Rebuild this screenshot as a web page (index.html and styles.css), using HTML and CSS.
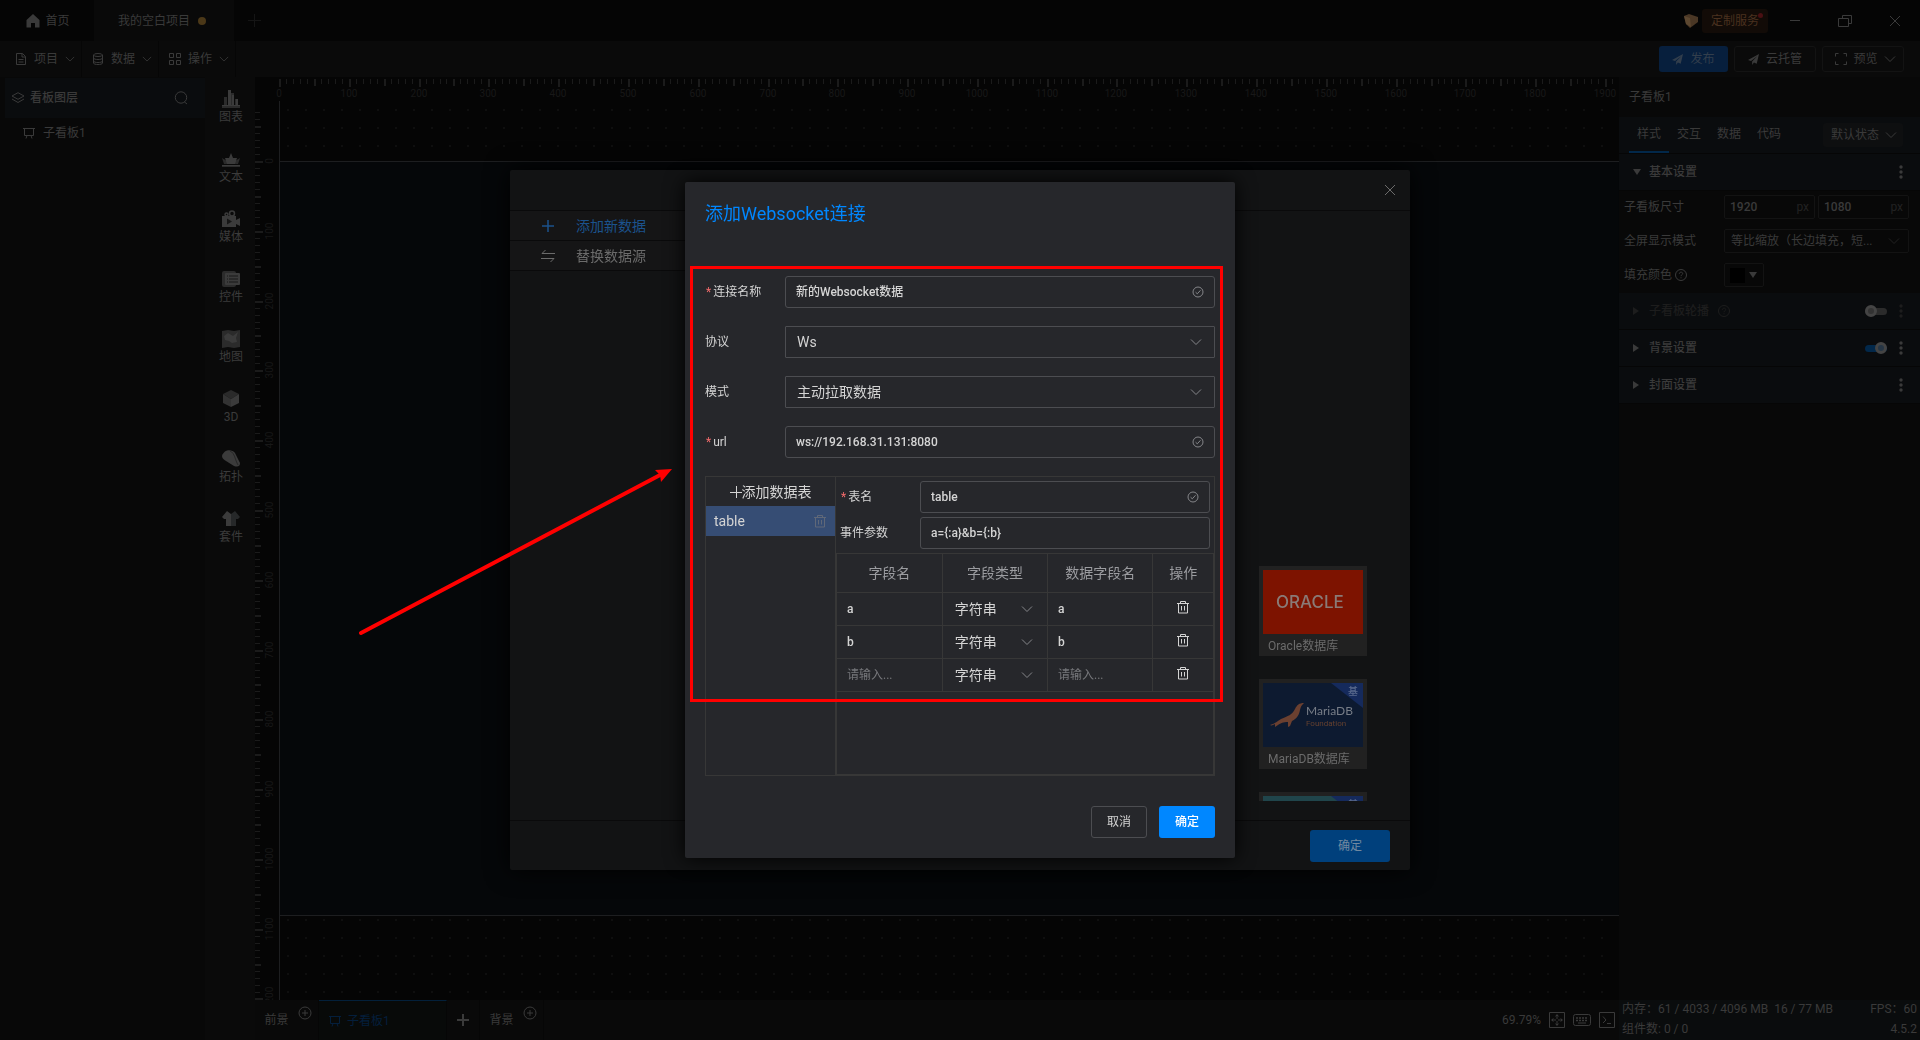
FILE: index.html
```html
<!DOCTYPE html>
<html lang="zh-CN">
<head>
<meta charset="UTF-8" />
<meta name="viewport" content="width=device-width, initial-scale=1" />
<title>我的空白项目</title>
<link rel="stylesheet" href="styles.css">
</head>
<body>

<svg class="sprite" aria-hidden="true">
  <symbol id="i-down" viewBox="0 0 12 12"><path d="M1 3.500 6 8.500l5-5" fill="none" stroke="currentColor"/></symbol>
  <symbol id="i-check" viewBox="0 0 12 12"><g fill="none" stroke="currentColor"><circle cx="6" cy="6" r="5"/><path d="M3.600 6.200 5.300 7.800 8.500 4.300"/></g></symbol>
  <symbol id="i-trash" viewBox="0 0 14 14"><path d="M1 3.500h12M4.500 3.500V1.500h5v2M2.500 3.500v9.500h9V3.500M5.500 6v4.500M8.500 6v4.500" fill="none" stroke="currentColor"/></symbol>
  <symbol id="i-board" viewBox="0 0 12 12"><path d="M0 1.500h12M1.500 1.500v7h9v-7M4 8.500 3 11.500M8 8.500l1 3" fill="none" stroke="currentColor"/></symbol>
  <symbol id="i-add" viewBox="0 0 14 14"><g fill="none" stroke="currentColor"><circle cx="7" cy="7" r="6"/><path d="M4 7h6M7 4v6"/></g></symbol>
  <symbol id="i-help" viewBox="0 0 14 14"><g fill="none" stroke="currentColor"><circle cx="7" cy="7" r="5.500"/><path d="M5.300 5.800C5.300 3.600 8.700 3.600 8.700 5.600 8.700 6.700 7 6.800 7 8.200M7 9.300v1"/></g></symbol>
  <symbol id="i-more" viewBox="0 0 4 14"><g fill="currentColor"><circle cx="2" cy="2" r="1.700"/><circle cx="2" cy="7" r="1.700"/><circle cx="2" cy="12" r="1.700"/></g></symbol>
  <symbol id="i-plane" viewBox="0 0 12 12"><path d="M12 0 0 6.500l3.300 1.200L10 2.500 4.500 8.300V12l2-2.600 3 1.200z" fill="currentColor"/></symbol>
  <symbol id="i-close" viewBox="0 0 12 12"><path d="M1 1l10 10M11 1 1 11" fill="none" stroke="currentColor"/></symbol>
</svg>

<div class="app">
  <header class="titlebar">
    <button class="tab home">
      <svg width="14" height="14" viewBox="0 0 14 14"><path d="M7 0 .500 6v7.500h4.500V9h4v4.500h4.500V6z" fill="currentColor"/></svg>首页
    </button>
    <button class="tab active">我的空白项目<i class="dot"></i></button>
    <button class="tab-add" aria-label="新建"><svg width="13" height="13" viewBox="0 0 13 13"><path d="M0 6.500h13M6.500 0v13" stroke="currentColor"/></svg></button>
    <div class="window-tools">
      <svg width="14" height="14" viewBox="0 0 14 14"><path d="M0 2 5 0l9 3v5l-8 6-4-4z" fill="#4a3725"/><path d="M0 2l6 2 1 9-5-3z" fill="#5c4730"/></svg>
      <button class="service">定制服务<i></i></button>
      <button class="win" aria-label="最小化"><svg width="14" height="14" viewBox="0 0 14 14"><path d="M2 6.500h10" stroke="currentColor"/></svg></button>
      <button class="win" aria-label="还原"><svg width="14" height="14" viewBox="0 0 14 14"><path d="M.500 4.500h10v8h-10zM4.500 4.500v-3h9v8h-3" fill="none" stroke="currentColor"/></svg></button>
      <button class="win" aria-label="关闭"><svg width="12" height="12"><use href="#i-close"/></svg></button>
    </div>
  </header>

  <nav class="menubar">
    <button class="menu"><svg width="12" height="12" viewBox="0 0 12 12"><path d="M1.500.500h6l3 3v8h-9zM7 .500V4h3.500M3.500 6.500h5M3.500 9h5" fill="none" stroke="currentColor"/></svg>项目<svg class="arrow" width="10" height="10"><use href="#i-down"/></svg></button>
    <button class="menu"><svg width="12" height="12" viewBox="0 0 12 12"><g fill="none" stroke="currentColor"><ellipse cx="6" cy="2" rx="4.500" ry="1.500"/><path d="M1.500 2v8c0 2 9 2 9 0V2M1.500 5c0 2 9 2 9 0M1.500 8c0 2 9 2 9 0"/></g></svg>数据<svg class="arrow" width="10" height="10"><use href="#i-down"/></svg></button>
    <button class="menu"><svg width="12" height="12" viewBox="0 0 12 12"><path d="M.500.500h4v4h-4zM7.500.500h4v4h-4zM.500 7.500h4v4h-4zM7.500 7.500h4v4h-4z" fill="none" stroke="currentColor"/></svg>操作<svg class="arrow" width="10" height="10"><use href="#i-down"/></svg></button>
    <div class="actions">
      <button class="act publish"><svg width="11" height="11"><use href="#i-plane"/></svg>发布</button>
      <button class="act cloud"><svg width="11" height="11"><use href="#i-plane"/></svg>云托管</button>
      <button class="act preview"><svg width="12" height="12" viewBox="0 0 12 12"><path d="M.500 3.500v-3h3M8.500.500h3v3M11.500 8.500v3h-3M3.500 11.500h-3v-3" fill="none" stroke="currentColor"/></svg>预览<svg width="12" height="12"><use href="#i-down"/></svg></button>
    </div>
  </nav>

  <main class="workspace">
    <aside class="layers">
      <div class="layers-head">
        <svg width="14" height="12" viewBox="0 0 14 12"><path d="M7 .700 13 4 7 7.300 1 4zM1 7l6 3.500L13 7" fill="none" stroke="currentColor"/></svg>
        <b>看板图层</b>
        <svg width="14" height="14" viewBox="0 0 14 14"><g fill="none" stroke="currentColor"><circle cx="7" cy="6.500" r="5.700"/><path d="M10.500 11l2.500 2"/></g></svg>
      </div>
      <div class="layer"><svg width="12" height="12"><use href="#i-board"/></svg>子看板1</div>
    </aside>

    <nav class="tools">
      <button><svg width="18" height="18" viewBox="0 0 18 18"><path d="M0 16h18v2H0zM9 3h3v12H9zM2 7h3v8H2zM13 9h3v6h-3z" fill="#2b2b2b"/><path d="M0 15h18v1H0zM6 0h3v15H6zM10 5h2v10h-2zM14 9h2v6h-2z" fill="currentColor"/></svg>图表</button>
      <button><svg width="18" height="18" viewBox="0 0 18 18"><path d="M0 15h18v2H0zM0 8l5 3 1 3H2zM18 8l-5 3-1 3h4z" fill="#2b2b2b"/><path d="M9 3l2 5 4 0-2 6H5L3 8h4zM0 15h18v1H0z" fill="currentColor"/></svg>文本</button>
      <button><svg width="18" height="18" viewBox="0 0 18 18"><g fill="none" stroke="currentColor" stroke-width="1.500"><circle cx="10" cy="3.500" r="2.500"/><circle cx="4.500" cy="4.500" r="1.500"/></g><path d="M0 6h14v11H0zM14 10l4-2v8l-4-2z" fill="currentColor"/><path d="M5 8.500v6l5-3z" fill="#161616"/></svg>媒体</button>
      <button><svg width="18" height="18" viewBox="0 0 18 18"><rect y="1" width="14" height="16" rx="2" fill="#2b2b2b"/><rect x="3" y="3" width="15" height="12" rx="1" fill="currentColor"/><path d="M5 6h1M7 6h9M5 9h1M7 9h9M5 12h1M7 12h9" stroke="#191919"/></svg>控件</button>
      <button><svg width="18" height="18" viewBox="0 0 18 18"><path d="M0 1l6-1 6 1 6-1v17l-6 1-6-1-6 1z" fill="#2b2b2b"/><path d="M2 6l4-3 5 3 5-4-2 6 1 4-5 1-3-2-4-1z" fill="currentColor"/></svg>地图</button>
      <button><svg width="18" height="18" viewBox="0 0 18 18"><path d="M9 0l8 4-8 5-8-5z" fill="#2a2a2a"/><path d="M1 4l8 5v8l-8-4z" fill="#333"/><path d="M17 4 9 9v8l8-4z" fill="currentColor"/></svg>3D</button>
      <button><svg width="18" height="18" viewBox="0 0 18 18"><path d="M0 6C2-1 10-1 13 3l5 10c0 4-3 4-6 3L4 11C1 9 0 8 0 6z" fill="currentColor"/><path d="M8 1c5 2 5 9 8 14" fill="none" stroke="#262626"/></svg>拓扑</button>
      <button><svg width="18" height="18" viewBox="0 0 18 18"><path d="M5 1l4 3v12H4V9H2L0 7z" fill="currentColor"/><path d="M13 1 9 4v12h5V9h2l2-2z" fill="#262829"/></svg>套件</button>
    </nav>

    <section class="center">
      <div class="stage"><svg id="stage"></svg></div>
      <footer class="boards">
        <button class="board ground">前景<svg width="14" height="14"><use href="#i-add"/></svg></button>
        <button class="board current"><svg width="12" height="12"><use href="#i-board"/></svg>子看板1</button>
        <button class="board more" aria-label="添加"><svg width="12" height="12" viewBox="0 0 12 12"><path d="M0 6h12M6 0v12" stroke="currentColor" stroke-width="2"/></svg></button>
        <button class="board ground">背景<svg width="14" height="14"><use href="#i-add"/></svg></button>
        <div class="zoom">
          <span>69.79%</span>
          <svg width="16" height="16" viewBox="0 0 16 16"><path d="M.500.500h15v15H.500z" fill="none" stroke="currentColor"/><path d="M8 5v6M5 8h6" stroke="currentColor" stroke-dasharray="2 2"/><path d="M8 2l2 2.500H6zM8 14l2-2.500H6zM2 8l2.500-2v4zM14 8l-2.500-2v4z" fill="currentColor"/></svg>
          <svg width="18" height="16" viewBox="0 0 18 16"><rect x=".500" y="2.500" width="17" height="11" rx="2" fill="none" stroke="currentColor"/><path d="M3 6h12M3 8.500h12" stroke="currentColor" stroke-width="1.500" stroke-dasharray="2 1"/><path d="M5 11h8" stroke="currentColor"/></svg>
          <svg width="16" height="16" viewBox="0 0 16 16"><path d="M.500.500h15v15H.500zM4 4.500 7 8l-3 3M8 11.500h4" fill="none" stroke="currentColor"/></svg>
        </div>
      </footer>
    </section>

    <aside class="props">
      <div class="props-title">子看板1</div>
      <div class="props-tabs">
        <button class="on">样式</button><button>交互</button><button>数据</button><button>代码</button>
        <div class="pick state">
          <select aria-label="状态"><option>默认状态</option></select>
          <svg width="12" height="12"><use href="#i-down"/></svg>
        </div>
      </div>
      <div class="group open"><i class="tri down"></i><b>基本设置</b><svg width="4" height="14"><use href="#i-more"/></svg></div>
      <div class="props-body">
        <div class="prop">
          <label for="w">子看板尺寸</label>
          <div class="num"><input type="text" id="w" value="1920"><span>px</span></div>
          <div class="num"><input type="text" aria-label="高" value="1080"><span>px</span></div>
        </div>
        <div class="prop">
          <label for="mode">全屏显示模式</label>
          <div class="pick fit">
            <select id="mode"><option>等比缩放（长边填充，短...</option></select>
            <svg width="12" height="12"><use href="#i-down"/></svg>
          </div>
        </div>
        <div class="prop">
          <label for="fill">填充颜色<svg width="14" height="14"><use href="#i-help"/></svg></label>
          <button class="swatch" id="fill" aria-label="填充颜色"><i></i><i class="tri down"></i></button>
        </div>
      </div>
      <div class="group off"><i class="tri"></i><b>子看板轮播</b><svg class="help" width="14" height="14"><use href="#i-help"/></svg><input type="checkbox" class="switch" aria-label="子看板轮播"><svg width="4" height="14"><use href="#i-more"/></svg></div>
      <div class="group"><i class="tri"></i><b>背景设置</b><input type="checkbox" class="switch" aria-label="背景设置" checked><svg width="4" height="14"><use href="#i-more"/></svg></div>
      <div class="group"><i class="tri"></i><b>封面设置</b><svg width="4" height="14"><use href="#i-more"/></svg></div>
      <div class="status">
        <div><span>内存：61 / 4033 / 4096 MB&nbsp; 16 / 77 MB</span><span>FPS：60</span></div>
        <div><span>组件数: 0 / 0</span><span>4.5.2</span></div>
      </div>
    </aside>
  </main>
</div>

<!-- 数据源 -->
<div class="mask">
  <div class="source">
    <div class="source-head"><button aria-label="关闭"><svg width="12" height="12"><use href="#i-close"/></svg></button></div>
    <div class="source-body">
      <div class="source-menu">
        <button class="on"><svg width="14" height="14" viewBox="0 0 14 14"><path d="M1 7h12M7 1v12" stroke="currentColor" stroke-width="1.500"/></svg>添加新数据</button>
        <button><svg width="14" height="14" viewBox="0 0 14 14"><path d="M4.500 1 1 4.500h13M0 9.500h13L9.500 13" fill="none" stroke="currentColor"/></svg>替换数据源</button>
      </div>
      <div class="source-list">
        <div class="card">
          <div class="pic oracle"><svg width="100" height="64" viewBox="0 0 100 64"><text x="13" y="38">ORACLE</text></svg></div>
          <span>Oracle数据库</span>
        </div>
        <div class="card">
          <div class="pic maria">
            <svg width="100" height="64" viewBox="0 0 100 64">
              <path d="M68 0h32v25z" fill="#152a5c"/>
              <path d="M7 42c5-1 7-4 11-6 7-3 11-4 14-10 2-4 4-6 9-6-2 2-3 3-4 7-1 6-4 9-8 11l-2 5-2 1v-5c-5 0-7 1-10 3l-3 2v-3c-2 1-3 2-5 1z" fill="#6b4030"/>
              <text x="43" y="32" class="m1">MariaDB</text>
              <text x="43" y="43" class="m2">Foundation</text>
              <text x="85" y="12" class="m3">基</text>
            </svg>
          </div>
          <span>MariaDB数据库</span>
        </div>
        <div class="card">
          <div class="pic teal">
            <svg width="100" height="64" viewBox="0 0 100 64"><path d="M68 0h32v25z" fill="#152a5c"/><text x="85" y="12" class="m3">基</text></svg>
          </div>
        </div>
      </div>
    </div>
    <div class="source-foot"><button>确定</button></div>
  </div>
</div>

<!-- Websocket 连接 -->
<div class="mask">
  <form class="dialog" onsubmit="return false">
    <h1>添加Websocket连接</h1>
    <div class="row">
      <label class="need" for="name">连接名称</label>
      <div class="field"><input type="text" id="name" value="新的Websocket数据"><svg width="12" height="12"><use href="#i-check"/></svg></div>
    </div>
    <div class="row">
      <label for="proto">协议</label>
      <div class="field pick"><select id="proto"><option>Ws</option><option>Wss</option></select><svg width="12" height="12"><use href="#i-down"/></svg></div>
    </div>
    <div class="row">
      <label for="pull">模式</label>
      <div class="field pick"><select id="pull"><option>主动拉取数据</option></select><svg width="12" height="12"><use href="#i-down"/></svg></div>
    </div>
    <div class="row">
      <label class="need" for="url">url</label>
      <div class="field"><input type="text" id="url" value="ws://192.168.31.131:8080"><svg width="12" height="12"><use href="#i-check"/></svg></div>
    </div>

    <div class="tables">
      <div class="tables-list">
        <button class="add"><svg width="12" height="12" viewBox="0 0 12 12"><path d="M0 6.500h12M6.500 0v12" stroke="currentColor"/></svg>添加数据表</button>
        <div class="item"><span>table</span><button aria-label="删除"><svg width="14" height="14"><use href="#i-trash"/></svg></button></div>
      </div>
      <div class="tables-main">
        <div class="table-form">
          <label class="need" for="tname">表名</label>
          <div class="field"><input type="text" id="tname" value="table"><svg width="12" height="12"><use href="#i-check"/></svg></div>
          <label for="params">事件参数</label>
          <div class="field"><input type="text" id="params" value="a={:a}&amp;b={:b}"></div>
        </div>
        <div class="table-box">
          <table>
            <thead>
              <tr><th class="col">字段名</th><th class="col">字段类型</th><th class="col">数据字段名</th><th>操作</th></tr>
            </thead>
            <tbody>
              <tr>
                <td><input type="text" aria-label="字段名" value="a"></td>
                <td><div class="pick"><select aria-label="字段类型"><option>字符串</option></select><svg width="12" height="12"><use href="#i-down"/></svg></div></td>
                <td><input type="text" aria-label="数据字段名" value="a"></td>
                <td><button aria-label="删除"><svg width="14" height="14"><use href="#i-trash"/></svg></button></td>
              </tr>
              <tr>
                <td><input type="text" aria-label="字段名" value="b"></td>
                <td><div class="pick"><select aria-label="字段类型"><option>字符串</option></select><svg width="12" height="12"><use href="#i-down"/></svg></div></td>
                <td><input type="text" aria-label="数据字段名" value="b"></td>
                <td><button aria-label="删除"><svg width="14" height="14"><use href="#i-trash"/></svg></button></td>
              </tr>
              <tr>
                <td><input type="text" aria-label="字段名" placeholder="请输入..."></td>
                <td><div class="pick"><select aria-label="字段类型"><option>字符串</option></select><svg width="12" height="12"><use href="#i-down"/></svg></div></td>
                <td><input type="text" aria-label="数据字段名" placeholder="请输入..."></td>
                <td><button aria-label="删除"><svg width="14" height="14"><use href="#i-trash"/></svg></button></td>
              </tr>
            </tbody>
          </table>
        </div>
      </div>
    </div>

    <div class="dialog-foot">
      <button class="cancel">取消</button>
      <button class="ok">确定</button>
    </div>

    <div class="mark"></div>
    <svg class="mark-arrow" width="320" height="180" viewBox="0 0 320 180">
      <path d="M5 170 306 11" stroke="#f00" stroke-width="4" stroke-linecap="round"/>
      <path d="M316 6 305 19 304 12 299 7z" fill="#f00"/>
    </svg>
  </form>
</div>

<script src="script.js"></script>
</body>
</html>
```

FILE: styles.css
```css
* {
  box-sizing: border-box;
}
body {
  margin: 0;
  font-family: Roboto, "Noto Sans CJK SC", sans-serif;
  font-size: 12px;
  line-height: 18px;
  background: #060606;
  color: #3a3a3a;
  overflow: hidden;
}
button, input, select {
  font: inherit;
  color: inherit;
  background: none;
  border: none;
  padding: 0;
  margin: 0;
  outline: none;
}
button {
  cursor: pointer;
}
b {
  font-weight: 500;
}
svg {
  display: block;
  flex: none;
}
.sprite {
  display: none;
}
.pick {
  display: grid;
  align-items: center;
}
.pick select, .pick svg {
  grid-area: 1 / 1;
}
.pick select {
  appearance: none;
  width: 100%;
  height: 100%;
}
.pick svg {
  justify-self: end;
  pointer-events: none;
}

/* app */
.app {
  height: 100vh;
  display: grid;
  grid-template-rows: 41px 36px 1fr;
}
.titlebar {
  display: flex;
  align-items: center;
  background: #050505;
}
.tab {
  display: flex;
  align-items: center;
  justify-content: center;
  gap: 5px;
  width: 94px;
  height: 41px;
}
.tab.home {
  padding-left: 2px;
}
.tab.active {
  width: 140px;
  gap: 8px;
  padding-right: 4px;
  background: #090909;
}
.dot {
  width: 8px;
  height: 8px;
  border-radius: 50%;
  background: #4b3818;
}
.tab-add {
  padding: 0 14px;
  color: #151515;
}
.window-tools {
  margin-left: auto;
  display: flex;
  align-items: center;
  gap: 4px;
  padding-right: 2px;
}
.service {
  position: relative;
  width: 66px;
  height: 24px;
  border-radius: 3px;
  background: #120b07;
  color: #4a311f;
}
.service i {
  position: absolute;
  top: 4px;
  right: 5px;
  width: 5px;
  height: 5px;
  border-radius: 50%;
  background: #4a1013;
}
.win {
  width: 46px;
  height: 40px;
  display: grid;
  place-items: center;
}
.menubar {
  display: flex;
  align-items: center;
  background: #0a0a0a;
  padding: 0 16px 0 5px;
}
.menu {
  display: flex;
  align-items: center;
  gap: 7px;
  width: 77px;
  height: 36px;
  padding-left: 10px;
  border-right: 1px solid #060606;
}
.actions {
  margin-left: auto;
  display: flex;
  gap: 6px;
}
.act {
  display: flex;
  align-items: center;
  justify-content: center;
  gap: 7px;
  width: 82px;
  height: 26px;
  border: 1px solid #131313;
  border-radius: 3px;
}
.act.publish {
  width: 69px;
  border: none;
  background: #071f3d;
  color: #323e4c;
}
.act.preview {
  gap: 6px;
  padding-left: 5px;
}

.workspace {
  display: grid;
  grid-template-columns: 205px 50px 1fr 301px;
  min-height: 0;
}
.layers {
  padding: 1px 0 0 5px;
  background: #080808;
}
.layers-head {
  display: flex;
  align-items: center;
  gap: 5px;
  height: 40px;
  padding: 0 17px 0 6px;
  background: #0a0c0e;
}
.layers-head b {
  flex: 1;
}
.layer {
  display: flex;
  align-items: center;
  gap: 8px;
  height: 30px;
  padding-left: 18px;
}
.tools {
  display: flex;
  flex-direction: column;
  gap: 24px;
  padding: 13px 0 0 2px;
  background: #0a0a0a;
}
.tools button {
  display: flex;
  flex-direction: column;
  align-items: center;
  color: #3b3b3b;
}

.center {
  display: grid;
  grid-template-rows: 1fr 40px;
  min-width: 0;
  min-height: 0;
}
.stage {
  min-height: 0;
  overflow: hidden;
  background: #050505;
}
.stage svg {
  width: 100%;
  height: 100%;
}
.stage text {
  font-size: 10px;
  fill: #181818;
  text-anchor: middle;
}
.boards {
  display: flex;
  background: #090909;
}
.board {
  display: flex;
  align-items: center;
  justify-content: center;
  gap: 6px;
  width: 64px;
  height: 40px;
  border-right: 1px solid #060606;
}
.board.ground {
  gap: 9px;
  padding-left: 3px;
}
.board.ground svg {
  margin-bottom: 14px;
}
.board.current {
  justify-content: flex-start;
  width: 128px;
  padding-left: 10px;
  border-top: 1px solid #03203a;
  background: #080a09;
  color: #041f3c;
}
.board.more {
  width: 33px;
}
.zoom {
  margin-left: auto;
  display: flex;
  align-items: center;
  gap: 8px;
  padding-right: 4px;
}

/* right panel */
.props {
  display: flex;
  flex-direction: column;
  min-width: 0;
  background: #080808;
}
.props-title {
  height: 40px;
  line-height: 40px;
  padding-left: 10px;
}
.props-tabs {
  display: flex;
  height: 37px;
  padding-left: 10px;
  background: #0a0c0e;
  border-bottom: 1px solid #060606;
}
.props-tabs button {
  width: 40px;
  height: 36px;
  border-bottom: 2px solid transparent;
}
.props-tabs .on {
  border-bottom-color: #02284a;
}
.state {
  width: 80px;
  height: 24px;
  margin: 6px 17px 0 auto;
  padding: 0 6px 0 8px;
  border-radius: 3px;
  background: #0e0f10;
}
.group {
  display: flex;
  align-items: center;
  gap: 8px;
  height: 37px;
  padding: 0 17px 0 14px;
  background: #0a0c0e;
  border-bottom: 1px solid #060606;
}
.group b {
  margin-right: auto;
}
.group.off {
  color: #1d1d1d;
}
.group.off b {
  margin: 0;
}
.group .help {
  margin-right: auto;
}
.group.off .tri {
  border-left-color: #1d1d1d;
}
.tri {
  width: 6px;
  height: 8px;
  border: 4px solid transparent;
  border-left: 6px solid #3a3a3a;
  border-right: 0;
  margin-right: 2px;
}
.tri.down {
  width: 8px;
  height: 6px;
  border: 4px solid transparent;
  border-top: 6px solid #3a3a3a;
  border-bottom: 0;
  margin-right: 0;
}
.switch {
  appearance: none;
  display: flex;
  align-items: center;
  width: 22px;
  height: 7px;
  border-radius: 4px;
  margin-right: 4px;
  background: #2b2b2b;
}
.switch::before {
  content: "";
  box-sizing: border-box;
  width: 12px;
  height: 12px;
  flex: none;
  border-radius: 50%;
  border: 3px solid #444;
  background: #333;
}
.switch:checked {
  justify-content: flex-end;
  background: #02284a;
}
.switch:checked::before {
  background: #263645;
}
.props-body {
  display: flex;
  flex-direction: column;
  gap: 10px;
  padding: 4px 11px 6px 5px;
}
.prop {
  display: flex;
  gap: 3px;
}
.prop label {
  display: flex;
  align-items: center;
  gap: 2px;
  width: 97px;
}
.num, .fit, .swatch {
  height: 24px;
  border: 1px solid #131313;
  border-radius: 2px;
}
.num {
  flex: 1;
  min-width: 0;
  display: flex;
  align-items: center;
  padding: 0 5px;
}
.num input {
  flex: 1;
  min-width: 0;
  font-weight: 500;
}
.num span {
  color: #222;
}
.fit {
  flex: 1;
  padding: 0 8px 0 6px;
}
.fit svg {
  color: #222;
}
.swatch {
  display: flex;
  align-items: center;
  gap: 4px;
  width: 40px;
  padding-left: 5px;
}
.swatch i:first-child {
  width: 15px;
  height: 15px;
  background: #000;
}
.status {
  height: 40px;
  margin-top: auto;
  padding: 0 3px;
  background: #0a0c0d;
}
.status div {
  display: flex;
  justify-content: space-between;
  height: 20px;
}

/* data source dialog */
.mask {
  position: fixed;
  inset: 0;
  display: grid;
  place-items: center;
}
.source {
  display: grid;
  grid-template-rows: 41px 1fr 50px;
  width: 900px;
  height: 700px;
  border-radius: 2px;
  background: #121314;
  box-shadow: 0 0 24px #000;
  color: #6b6b6b;
  font-size: 14px;
}
.source-head {
  display: flex;
  justify-content: flex-end;
  align-items: center;
  padding-right: 14px;
  border-bottom: 1px solid #0a0a0b;
}
.source-body {
  display: flex;
  justify-content: space-between;
  min-height: 0;
}
.source-menu {
  width: 200px;
}
.source-menu button {
  display: flex;
  align-items: center;
  gap: 21px;
  width: 100%;
  height: 30px;
  padding-left: 31px;
  background: #151516;
  border-bottom: 1px solid #0a0a0b;
}
.source-menu .on {
  color: #1b528c;
}
.source-list {
  display: flex;
  flex-direction: column;
  gap: 23px;
  margin: 0 43px 19px 0;
  padding-top: 355px;
  overflow: hidden;
}
.card {
  flex: none;
  width: 108px;
  height: 90px;
  padding: 4px;
  background: #212121;
  font-size: 12px;
}
.card span {
  display: block;
  padding: 3px 5px;
}
.pic.oracle {
  background: #7d1300;
}
.pic.maria {
  background: #0d1a30;
}
.pic.teal {
  background: #20454b;
}
.pic text {
  fill: #8a7a76;
  font-family: Inter, sans-serif;
  font-size: 17px;
  font-weight: 500;
}
.pic .m1 {
  fill: #777d87;
  font-family: Lato, sans-serif;
  font-size: 12px;
  font-weight: 400;
}
.pic .m2 {
  fill: #64402f;
  font-family: Roboto, sans-serif;
  font-size: 8px;
  font-weight: 400;
}
.pic .m3 {
  fill: #5b6b8e;
  font-family: "Noto Sans CJK SC", sans-serif;
  font-size: 10px;
}
.source-foot {
  display: flex;
  justify-content: flex-end;
  align-items: flex-start;
  padding: 9px 20px 0;
  border-top: 1px solid #0a0a0b;
}
.source-foot button {
  width: 80px;
  height: 32px;
  border-radius: 3px;
  background: #00407c;
  color: #7289a0;
  font-size: 12px;
}

/* websocket dialog */
.dialog {
  position: relative;
  width: 550px;
  padding: 20px;
  border-radius: 2px;
  background: #26272b;
  box-shadow: 0 0 20px #000;
  color: #d4d4d4;
}
.dialog h1 {
  margin: 0 0 50px;
  font-size: 18px;
  font-weight: 400;
  line-height: 24px;
  color: #0087ff;
}
.row {
  display: flex;
  align-items: center;
  margin-bottom: 18px;
}
.row label {
  width: 80px;
}
.need::before {
  content: "*";
  margin: 0 2px 0 1px;
  color: #f56c6c;
}
.field {
  flex: 1;
  display: flex;
  align-items: center;
  height: 32px;
  padding: 0 10px;
  border: 1px solid #4c4d51;
  border-radius: 3px;
}
.field input {
  flex: 1;
  min-width: 0;
  font-weight: 500;
}
.field.pick {
  display: grid;
  padding: 0 12px 0 11px;
  border-radius: 1px;
  font-size: 14px;
}
.field svg, td .pick svg {
  color: #85868a;
}
.tables {
  display: grid;
  grid-template-columns: 130px 1fr;
  height: 300px;
  border: 1px solid #373737;
}
.tables-list {
  border-right: 1px solid #373737;
  font-size: 14px;
}
.tables-list .add {
  display: flex;
  align-items: center;
  justify-content: center;
  width: 100%;
  height: 29px;
}
.item {
  display: flex;
  align-items: center;
  justify-content: space-between;
  height: 30px;
  padding: 0 8px;
  background: #364d74;
}
.item svg {
  color: #606878;
}
.tables-main {
  display: grid;
  grid-template-rows: 76px 1fr;
}
.table-form {
  display: grid;
  grid-template-columns: 80px 1fr;
  gap: 4px 0;
  align-items: center;
  align-content: start;
  padding: 4px 4px 0;
}
.table-box {
  border: 1px solid #373737;
}
table {
  width: 100%;
  border-collapse: collapse;
  table-layout: fixed;
}
th, td {
  height: 33px;
  padding: 0;
  border: 1px solid #373737;
  border-top: none;
}
th {
  width: 60px;
  height: 38px;
  font-size: 14px;
  font-weight: 400;
  color: #9b9ca0;
}
.col {
  width: 28%;
}
th:first-child, td:first-child {
  border-left: none;
}
th:last-child, td:last-child {
  border-right: none;
}
td input {
  display: block;
  width: 100%;
  padding: 0 10px;
  font-weight: 500;
}
td input::placeholder {
  color: #76777b;
  font-weight: 400;
}
td .pick {
  padding: 0 14px 0 12px;
  font-size: 14px;
}
td button {
  display: block;
  margin: 0 auto 4px;
}
.dialog-foot {
  display: flex;
  justify-content: flex-end;
  gap: 12px;
  margin-top: 30px;
}
.dialog-foot button {
  width: 56px;
  height: 32px;
  border-radius: 3px;
}
.cancel {
  border: 1px solid #4c4d51;
}
.ok {
  background: #0087ff;
  color: #fff;
  font-weight: 500;
}
.mark {
  position: absolute;
  top: 84px;
  left: 5px;
  width: 533px;
  height: 436px;
  border: 3px solid #f00;
  pointer-events: none;
}
.mark-arrow {
  position: absolute;
  top: 281px;
  left: -329px;
  pointer-events: none;
}
```

FILE: script.js
```js
const stage = document.getElementById('stage');
const scale = 0.6979;
const left = 24;
const top0 = 84;

function drawStage() {
  const w = stage.clientWidth;
  const h = stage.clientHeight;
  const bottom = top0 + Math.round(1080 * scale);
  let s = '<defs><pattern id="dots" x="32" y="32" width="18" height="18" patternUnits="userSpaceOnUse"><rect width="2" height="2" fill="#0f0f0f"/></pattern></defs>';
  s += `<rect x="${left}" y="26" width="${w}" height="${h}" fill="url(#dots)"/>`;
  s += `<rect x="${left}" y="${top0}" width="${1920 * scale}" height="${bottom - top0}" fill="#050709"/>`;
  s += `<path d="M${left} ${top0 + 0.5}H${w}M${left} ${bottom + 0.5}H${w}M${left + 0.5} 24V${h}" stroke="#1d1e20"/>`;

  // horizontal ruler
  for (let v = 0; left + v * scale < w; v += 10) {
    const x = Math.round(left + v * scale);
    const big = v % 50 === 0;
    s += `<rect x="${x}" y="2" width="${big ? 2 : 1}" height="${v % 100 === 0 ? 8 : big ? 7 : 5}" fill="#1b1b1b"/>`;
    if (v % 100 === 0) s += `<text x="${x}" y="20">${v}</text>`;
  }

  // vertical ruler
  for (let v = -70; top0 + v * scale < h; v += 10) {
    const y = Math.round(top0 + v * scale);
    const big = v % 50 === 0;
    s += `<rect x="0" y="${y}" width="${v % 100 === 0 ? 8 : big ? 6 : 5}" height="${big ? 2 : 1}" fill="#1b1b1b"/>`;
    if (v % 100 === 0) s += `<text transform="translate(18 ${y}) rotate(-90)">${v}</text>`;
  }
  stage.innerHTML = s;
}

drawStage();
window.addEventListener('resize', drawStage);
```
